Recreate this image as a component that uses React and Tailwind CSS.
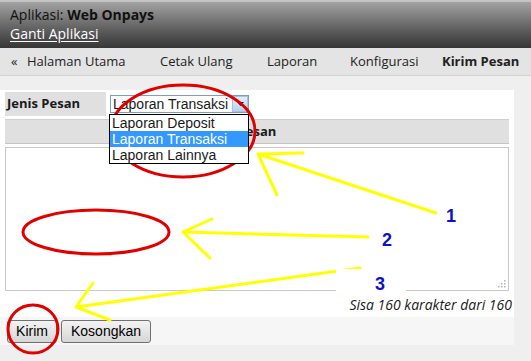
import React from 'react';

const navItems = [
  { label: 'Cetak Ulang', w: 'w-[107px]' },
  { label: 'Laporan', w: 'w-[83px]' },
  { label: 'Konfigurasi', w: 'w-[92px]' },
];

const options = ['Laporan Deposit', 'Laporan Transaksi', 'Laporan Lainnya'];

// red circles + yellow arrows drawn over the screenshot
const Annotations = () => (
  <svg className="absolute inset-0 pointer-events-none" width="531" height="361" viewBox="0 0 531 361">
    <g fill="none" stroke="#ffff00" strokeWidth="3" strokeLinecap="round" strokeLinejoin="round">
      <path d="M436 213 L258 154 M258 154 L303 153 M258 154 L277 195" />
      <path d="M368 237 L183 232 M183 232 L212 219 M183 232 L210 258" />
      <path d="M360 268 L76 307 M76 307 L93 283 M76 307 L110 320" />
    </g>
    <rect x="336" y="269" width="70" height="22" fill="#ffffff" />
    <g fill="none" stroke="#e00000" strokeWidth="3">
      <ellipse cx="183" cy="131" rx="72" ry="46" />
      <ellipse cx="96" cy="232" rx="73" ry="22" />
      <ellipse cx="33" cy="329" rx="25" ry="24" />
    </g>
    <g fill="#1010c8" fontFamily="Liberation Sans, Arial, sans-serif" fontSize="18" fontWeight="bold">
      <text x="446" y="222">1</text>
      <text x="382" y="246">2</text>
      <text x="375" y="290">3</text>
    </g>
  </svg>
);

const App = () => {
  return (
    <div className="relative w-[531px] h-[361px] overflow-hidden bg-[#efefef] text-[13px] text-[#1a1a1a]" style={{ fontFamily: '"Open Sans", sans-serif' }}>
      {/* header */}
      <div className="h-[48px] border-t-2 border-[#c4c4c4] bg-gradient-to-b from-[#a3a3a3] to-[#363636] pl-[10px] pt-[3px] leading-[19px] text-[14px]">
        <div className="text-[#111]">Aplikasi: <span className="font-bold">Web Onpays</span></div>
        <div className="text-white underline underline-offset-2">Ganti Aplikasi</div>
      </div>

      {/* nav */}
      <div className="h-[28px] flex items-center bg-[#e4e4e4] border-b border-[#d2d2d2] text-[#222]">
        <div className="w-[160px] pl-[11px] flex items-center">
          <span className="w-[16px]">«</span>
          <span>Halaman Utama</span>
        </div>
        {navItems.map(n => (
          <div key={n.label} className={n.w}>{n.label}</div>
        ))}
        <div className="font-bold">Kirim Pesan</div>
      </div>

      {/* content */}
      <div className="pt-[14px]">
        <div className="w-[514px] bg-white">
          <div className="px-[5px] pt-[2px]">
            <div className="flex items-center h-[24px]">
              <div className="w-[101px] h-[24px] bg-[#e0e0e0] pl-[2px] flex items-center font-bold">Jenis Pesan</div>
              <div className="relative ml-[4px] flex h-[18px] border border-[#7f9db9] bg-white text-[14px]" style={{ fontFamily: '"Liberation Sans", Arial, sans-serif' }}>
                <div className="w-[121px] pl-[2px] leading-[16px] overflow-hidden whitespace-nowrap">Laporan Transaksi</div>
                <div className="w-[16px] h-[16px] border border-[#a9c1e0] bg-gradient-to-b from-[#e3effc] to-[#b7d1f0] flex items-center justify-center">
                  <svg width="7" height="4" viewBox="0 0 7 4"><path d="M0 0 H7 L3.5 4 Z" fill="#000" /></svg>
                </div>
                <div className="absolute left-[-2px] top-[18px] w-[140px] border border-black bg-white z-10">
                  {options.map((o, i) => (
                    <div key={o} className={`h-[16px] pl-[2px] leading-[16px] whitespace-nowrap ${i === 1 ? 'bg-[#3399ff] text-white' : ''}`}>{o}</div>
                  ))}
                </div>
              </div>
            </div>

            <div className="mt-[3px] h-[25px] bg-[#e0e0e0] border-t border-[#cfcfcf] border-b border-b-[#c4c4c4] flex items-center justify-center font-bold">
              Pesan
            </div>

            <div className="relative mt-[3px] h-[144px] border border-[#c9c9c9] bg-white">
              <svg className="absolute right-[2px] bottom-[2px]" width="8" height="8" viewBox="0 0 8 8">
                <g fill="#b5b5b5">
                  <rect x="6" y="0" width="1.5" height="1.5" />
                  <rect x="3" y="3" width="1.5" height="1.5" />
                  <rect x="6" y="3" width="1.5" height="1.5" />
                  <rect x="0" y="6" width="1.5" height="1.5" />
                  <rect x="3" y="6" width="1.5" height="1.5" />
                  <rect x="6" y="6" width="1.5" height="1.5" />
                </g>
              </svg>
            </div>

            <div className="h-[26px] flex items-center justify-end italic text-[14px] mr-[-3px]">
              Sisa 160 karakter dari 160
            </div>
          </div>

          <div className="h-[28px] bg-[#f6f6f6] flex items-center pl-[7px] gap-[4px]" style={{ fontFamily: '"Liberation Sans", Arial, sans-serif' }}>
            <button className="h-[23px] w-[50px] rounded-[3px] border border-[#707070] bg-gradient-to-b from-[#f3f3f3] to-[#d6d6d6] text-[14px] text-black">Kirim</button>
            <button className="h-[23px] w-[90px] rounded-[3px] border border-[#707070] bg-gradient-to-b from-[#f3f3f3] to-[#d6d6d6] text-[14px] text-black">Kosongkan</button>
          </div>
        </div>
      </div>

      <Annotations />
    </div>
  );
};

export default App;
